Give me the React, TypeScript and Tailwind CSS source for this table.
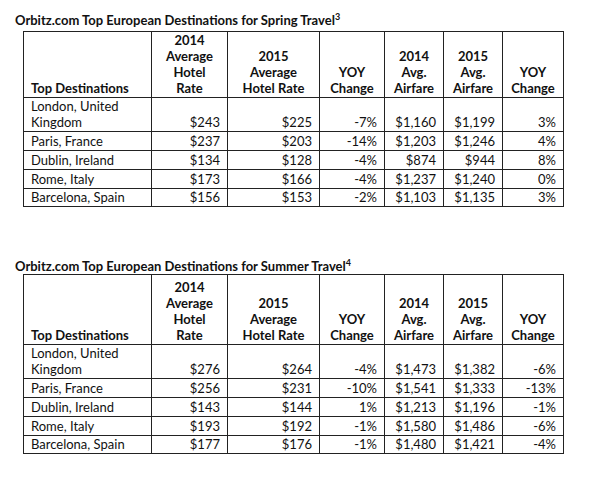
const SPRING = [
  ['London, United Kingdom', '$243', '$225', '-7%', '$1,160', '$1,199', '3%'],
  ['Paris, France', '$237', '$203', '-14%', '$1,203', '$1,246', '4%'],
  ['Dublin, Ireland', '$134', '$128', '-4%', '$874', '$944', '8%'],
  ['Rome, Italy', '$173', '$166', '-4%', '$1,237', '$1,240', '0%'],
  ['Barcelona, Spain', '$156', '$153', '-2%', '$1,103', '$1,135', '3%'],
];

const SUMMER = [
  ['London, United Kingdom', '$276', '$264', '-4%', '$1,473', '$1,382', '-6%'],
  ['Paris, France', '$256', '$231', '-10%', '$1,541', '$1,333', '-13%'],
  ['Dublin, Ireland', '$143', '$144', '1%', '$1,213', '$1,196', '-1%'],
  ['Rome, Italy', '$193', '$192', '-1%', '$1,580', '$1,486', '-6%'],
  ['Barcelona, Spain', '$177', '$176', '-1%', '$1,480', '$1,421', '-4%'],
];

const WIDTHS = ['w-[128px]', 'w-[76px]', 'w-[92px]', 'w-[65px]', 'w-[59px]', 'w-[59px]', 'w-[61px]'];

function DestTable({
  title,
  note,
  rows,
  headH,
  gap,
}: {
  title: string;
  note: string;
  rows: string[][];
  headH: string;
  gap: string;
}) {
  return (
    <div>
      <div className="pl-[15px] text-[13px] font-bold leading-[16px]">
        {title}
        <sup className="relative -top-[5px] text-[9px]">{note}</sup>
      </div>
      <table className={`ml-[23px] ${gap} border-collapse table-fixed text-[13px] leading-[16px]`}>
        <colgroup>
          {WIDTHS.map((w, i) => (
            <col key={i} className={w} />
          ))}
        </colgroup>
        <thead>
          <tr className={headH}>
            <th className="border border-[#222] px-[7px] pb-[1px] align-bottom text-left font-bold">Top Destinations</th>
            <th className="border border-[#222] px-[2px] pb-[1px] align-bottom font-bold">2014<br />Average<br />Hotel<br />Rate</th>
            <th className="border border-[#222] px-[2px] pb-[1px] align-bottom font-bold">2015<br />Average<br />Hotel Rate</th>
            <th className="border border-[#222] px-[2px] pb-[1px] align-bottom font-bold">YOY<br />Change</th>
            <th className="border border-[#222] px-[2px] pb-[1px] align-bottom font-bold">2014<br />Avg.<br />Airfare</th>
            <th className="border border-[#222] px-[2px] pb-[1px] align-bottom font-bold">2015<br />Avg.<br />Airfare</th>
            <th className="border border-[#222] px-[2px] pb-[1px] align-bottom font-bold">YOY<br />Change</th>
          </tr>
        </thead>
        <tbody>
          {rows.map((r, i) => (
            <tr key={i} className={i === 0 ? 'h-[33px]' : i === rows.length - 1 ? 'h-[18px]' : 'h-[19px]'}>
              <td className="border border-[#222] pl-[7px] pr-[2px] pb-[1px] align-bottom">
                {i === 0 ? (
                  <>
                    London, United
                    <br />
                    Kingdom
                  </>
                ) : (
                  r[0]
                )}
              </td>
              {r.slice(1).map((v, j) => (
                <td key={j} className="border border-[#222] pr-[7px] pb-[1px] align-bottom text-right">
                  {v}
                </td>
              ))}
            </tr>
          ))}
        </tbody>
      </table>
    </div>
  );
}

export default function App() {
  return (
    <div className="relative h-[497px] w-[600px] overflow-hidden bg-white text-[#111] font-['Lato',sans-serif]">
      <div className="pt-[12px]">
        <DestTable
          title="Orbitz.com Top European Destinations for Spring Travel"
          note="3"
          rows={SPRING}
          headH="h-[63px]"
          gap="mt-[3px]"
        />
      </div>
      <div className="pt-[51px]">
        <DestTable
          title="Orbitz.com Top European Destinations for Summer Travel"
          note="4"
          rows={SUMMER}
          headH="h-[70px]"
          gap="mt-0"
        />
      </div>
    </div>
  );
}
